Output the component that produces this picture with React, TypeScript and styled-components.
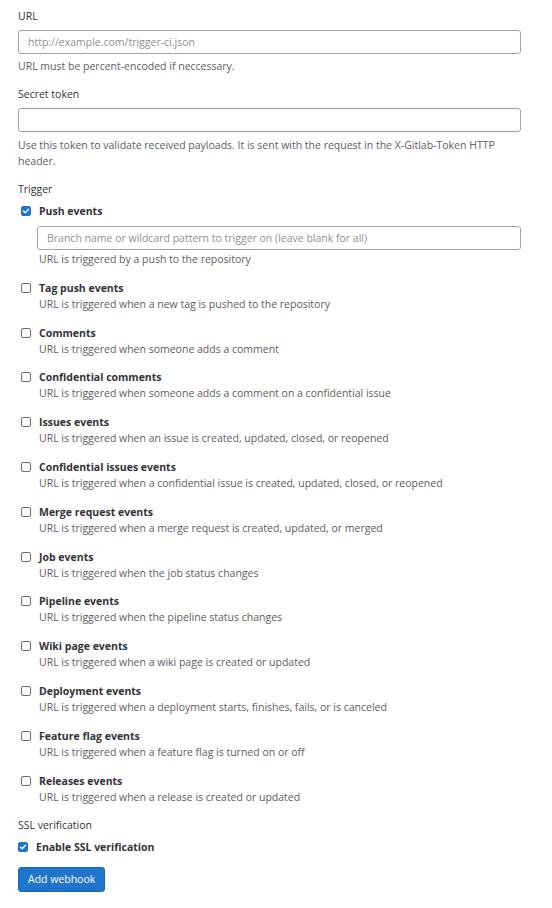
import { useState } from 'react'
import styled, { createGlobalStyle } from 'styled-components'

const Global = createGlobalStyle`
  body {
    margin: 0;
    background: #fff;
    font-family: "Open Sans", "Noto Sans", sans-serif;
    font-size: 10.5px;
    line-height: 16px;
    color: #333238;
  }
`

const Form = styled.form`
  width: 503px;
  padding: 8px 0 14px 18px;
  display: flex;
  flex-direction: column;
`

const Group = styled.div<{ $gap?: number }>`
  display: flex;
  flex-direction: column;
  margin-bottom: ${p => p.$gap ?? 12}px;
`

const GroupLabel = styled.div`
  line-height: 16px;
  margin-bottom: 6px;
  color: #333238;
`

const Input = styled.input`
  box-sizing: border-box;
  width: 100%;
  height: 24px;
  margin: 0;
  padding: 0 9px;
  border: 1px solid #a4a3a8;
  border-radius: 3px;
  font: inherit;
  color: #333238;
  outline: none;
  &::placeholder {
    color: #8f8f93;
  }
`

const Help = styled.p<{ $top?: number }>`
  margin: ${p => p.$top ?? 4}px 0 0;
  color: #5e5d63;
  line-height: 16px;
`

const Events = styled.div`
  display: flex;
  flex-direction: column;
  gap: 12.8px;
`

const Event = styled.div`
  display: flex;
  flex-direction: column;
`

const CheckRow = styled.label<{ $indent?: number }>`
  display: flex;
  align-items: center;
  gap: 8px;
  padding-left: ${p => p.$indent ?? 0}px;
  font-weight: 700;
  color: #333238;
  line-height: 16px;
  cursor: pointer;
`

const Box = styled.span<{ $on: boolean }>`
  box-sizing: border-box;
  width: 10px;
  height: 10px;
  flex: none;
  border-radius: 2px;
  border: 1px solid ${p => (p.$on ? '#1f75cb' : '#6e6d72')};
  background: ${p => (p.$on ? '#1f75cb' : '#fff')};
  display: flex;
  align-items: center;
  justify-content: center;
`

const Details = styled.div`
  padding-left: 21px;
  display: flex;
  flex-direction: column;
`

const BranchInput = styled(Input)`
  margin: 7px 0 1px -2px;
  width: calc(100% + 2px);
`

const Button = styled.button`
  align-self: flex-start;
  height: 25px;
  padding: 0 9px;
  margin-top: 12px;
  border: 1px solid #1068bf;
  border-radius: 3px;
  background: #1f75cb;
  color: #fff;
  font: inherit;
  cursor: pointer;
`

const Check = ({ on }: { on: boolean }) => (
  <Box $on={on}>
    {on && (
      <svg width="8" height="8" viewBox="0 0 8 8">
        <path d="M1.5 4.2 L3.2 5.8 L6.5 2.2" fill="none" stroke="#fff" strokeWidth="1.4" strokeLinecap="round" strokeLinejoin="round" />
      </svg>
    )}
  </Box>
)

const events = [
  ['Tag push events', 'URL is triggered when a new tag is pushed to the repository'],
  ['Comments', 'URL is triggered when someone adds a comment'],
  ['Confidential comments', 'URL is triggered when someone adds a comment on a confidential issue'],
  ['Issues events', 'URL is triggered when an issue is created, updated, closed, or reopened'],
  ['Confidential issues events', 'URL is triggered when a confidential issue is created, updated, closed, or reopened'],
  ['Merge request events', 'URL is triggered when a merge request is created, updated, or merged'],
  ['Job events', 'URL is triggered when the job status changes'],
  ['Pipeline events', 'URL is triggered when the pipeline status changes'],
  ['Wiki page events', 'URL is triggered when a wiki page is created or updated'],
  ['Deployment events', 'URL is triggered when a deployment starts, finishes, fails, or is canceled'],
  ['Feature flag events', 'URL is triggered when a feature flag is turned on or off'],
  ['Releases events', 'URL is triggered when a release is created or updated'],
]

export default function App() {
  const [checked, setChecked] = useState<Record<string, boolean>>({ push: true, ssl: true })
  const toggle = (k: string) => setChecked(c => ({ ...c, [k]: !c[k] }))

  return (
    <>
      <Global />
      <Form onSubmit={e => e.preventDefault()}>
        <Group>
          <GroupLabel>URL</GroupLabel>
          <Input placeholder="http://example.com/trigger-ci.json" />
          <Help>URL must be percent-encoded if neccessary.</Help>
        </Group>
        <Group>
          <GroupLabel>Secret token</GroupLabel>
          <Input />
          <Help $top={5}>Use this token to validate received payloads. It is sent with the request in the X-Gitlab-Token HTTP header.</Help>
        </Group>
        <Group $gap={12}>
          <GroupLabel>Trigger</GroupLabel>
          <Events>
            <Event>
              <CheckRow $indent={3} onClick={() => toggle('push')}>
                <Check on={!!checked.push} />
                Push events
              </CheckRow>
              <Details>
                <BranchInput placeholder="Branch name or wildcard pattern to trigger on (leave blank for all)" />
                <Help $top={0}>URL is triggered by a push to the repository</Help>
              </Details>
            </Event>
            {events.map(([name, desc]) => (
              <Event key={name}>
                <CheckRow $indent={3} onClick={() => toggle(name)}>
                  <Check on={!!checked[name]} />
                  {name}
                </CheckRow>
                <Details>
                  <Help $top={0}>{desc}</Help>
                </Details>
              </Event>
            ))}
          </Events>
        </Group>
        <Group $gap={0}>
          <GroupLabel>SSL verification</GroupLabel>
          <CheckRow onClick={() => toggle('ssl')}>
            <Check on={!!checked.ssl} />
            Enable SSL verification
          </CheckRow>
        </Group>
        <Button type="submit">Add webhook</Button>
      </Form>
    </>
  )
}
